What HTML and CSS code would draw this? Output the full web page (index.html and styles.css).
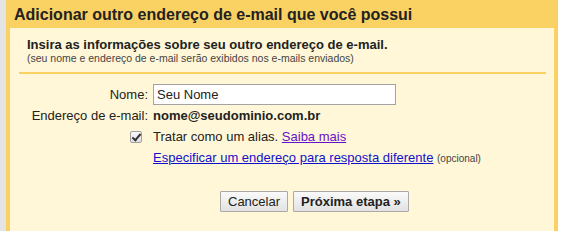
FILE: index.html
```html
<!DOCTYPE html>
<html lang="pt-BR">
<head>
    <meta charset="UTF-8">
    <title>Adicionar outro endereço</title>
    <link rel="stylesheet" href="styles.css">
</head>
<body>
    <div class="page">
        <div class="dialog">
            <h1 class="dialog-title">Adicionar outro endereço de e-mail que você possui</h1>
            <div class="dialog-body">
                <div class="intro">
                    <p class="intro-main">Insira as informações sobre seu outro endereço de e-mail.</p>
                    <p class="intro-note">(seu nome e endereço de e-mail serão exibidos nos e-mails enviados)</p>
                </div>

                <div class="form">
                    <label class="form-label" for="nome">Nome:</label>
                    <div class="form-value"><input id="nome" class="text-input" type="text" value="Seu Nome"></div>

                    <div class="form-label">Endereço de e-mail:</div>
                    <div class="form-value email">nome@seudominio.com.br</div>

                    <div class="form-label"><span class="check"></span></div>
                    <div class="form-value">Tratar como um alias. <a class="visited" href="#">Saiba mais</a></div>

                    <div class="form-label"></div>
                    <div class="form-value"><a href="#">Especificar um endereço para resposta diferente</a> <span class="optional">(opcional)</span></div>
                </div>

                <div class="actions">
                    <button class="btn">Cancelar</button>
                    <button class="btn btn-main">Próxima etapa »</button>
                </div>
            </div>
        </div>
    </div>
</body>
</html>
```

FILE: styles.css
```css
* {
    padding: 0;
    margin: 0;
    box-sizing: border-box;
}

body {
    background-color: #fff;
    font-family: Arial, "Liberation Sans", sans-serif;
    font-size: 13px;
    color: #222;
}

.page {
    height: 231px;
    border-left: 6px solid #e4e4e4;
    display: flex;
}

.dialog {
    width: 552px;
    height: 100%;
    background-color: #fad163;
    padding: 0 3px 0 4px;
    border-right: 1px solid #c9d0d6;
    display: flex;
    flex-direction: column;
}

.dialog-title {
    height: 28px;
    font-size: 16px;
    font-weight: bold;
    color: #222;
    padding: 6px 0 0 4px;
}

.dialog-body {
    flex: 1;
    background-color: #fff7d7;
    padding: 0 8px 0 9px;
}

.intro {
    padding: 9px 8px 8px;
    border-bottom: 2px solid #fad163;
}

.intro-main {
    font-weight: bold;
    line-height: 15px;
}

.intro-note {
    font-size: 10.5px;
    line-height: 12px;
    color: #444;
}

.form {
    display: grid;
    grid-template-columns: 129px 1fr;
    grid-auto-rows: 21px;
    column-gap: 5px;
    margin-top: 10px;
    align-items: center;
}

.form-label {
    text-align: right;
    display: flex;
    justify-content: flex-end;
    align-items: center;
}

.form-value.email {
    font-weight: bold;
}

.text-input {
    width: 243px;
    height: 21px;
    border: 1px solid #a3a3a3;
    background: #fff;
    font-family: Arial, "Liberation Sans", sans-serif;
    font-size: 13px;
    padding: 0 3px;
    color: #222;
}

.check {
    width: 12px;
    height: 12px;
    margin-right: 6px;
    border: 1px solid #a0a0a0;
    border-radius: 2px;
    background: linear-gradient(#fafafa, #e0e0e0);
    position: relative;
}

.check::after {
    content: "";
    position: absolute;
    left: 3px;
    top: 0px;
    width: 3px;
    height: 7px;
    border: solid #333;
    border-width: 0 2px 2px 0;
    transform: rotate(40deg);
}

a {
    color: #1111cc;
}

a.visited {
    color: #6611cc;
}

.optional {
    font-size: 10px;
    color: #444;
}

.actions {
    display: flex;
    gap: 5px;
    margin-top: 23px;
    padding-left: 201px;
}

.btn {
    height: 21px;
    padding: 0 7px;
    font-family: Arial, "Liberation Sans", sans-serif;
    font-size: 13px;
    color: #222;
    background: linear-gradient(#fafafa, #e2e2e2);
    border: 1px solid #a9a9a9;
    border-radius: 1px;
}

.btn-main {
    font-weight: bold;
}
```
